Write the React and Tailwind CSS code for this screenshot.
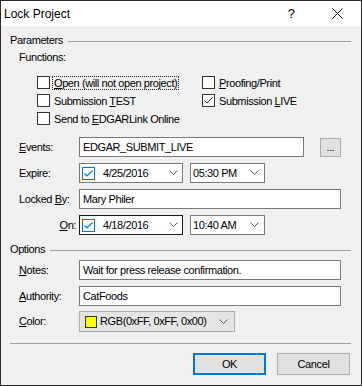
import React from 'react';

const Chevron = () => (
  <svg width="9" height="6" viewBox="0 0 9 6" className="shrink-0">
    <polyline points="0.5,0.5 4.5,4.5 8.5,0.5" fill="none" stroke="#5a5a5a" strokeWidth="1" />
  </svg>
);

const Check = ({ checked }) => (
  <span className="w-[13px] h-[13px] border border-[#333] bg-white shrink-0 flex items-center justify-center">
    {checked && (
      <svg width="11" height="11" viewBox="0 0 11 11">
        <polyline points="1.5,5.5 4,8 9.5,2.5" fill="none" stroke="#333" strokeWidth="1" />
      </svg>
    )}
  </span>
);

const U = ({ children }) => <span className="underline underline-offset-[1px]">{children}</span>;

const CheckItem = ({ checked, focus, children }) => (
  <div className="flex items-center h-[15px]">
    <Check checked={checked} />
    <span className={`ml-[2px] px-[1px] leading-[12px] border ${focus ? 'border-dotted border-[#222]' : 'border-transparent'}`}>
      {children}
    </span>
  </div>
);

const Row = ({ className = '', label, right, children }) => (
  <div className={`flex items-center ml-[18px] ${className}`}>
    <div className={`w-[60px] shrink-0 ${right ? 'text-right pr-[3px]' : ''}`}>{label}</div>
    {children}
  </div>
);

const TextBox = ({ w, children }) => (
  <div className={`${w} h-[20px] bg-white border border-[#7a7a7a] flex items-center pl-[3px]`}>{children}</div>
);

const DatePicker = ({ date, dark }) => (
  <div className={`w-[104px] h-[20px] bg-white border ${dark ? 'border-[#1a1a1a]' : 'border-[#7a7a7a]'} flex items-center pl-[2px] pr-[4px]`}>
    <span className="w-[13px] h-[13px] border border-[#0078d7] bg-white flex items-center justify-center shrink-0">
      <svg width="11" height="11" viewBox="0 0 11 11">
        <polyline points="1.5,5.5 4,8 9.5,2.5" fill="none" stroke="#0078d7" strokeWidth="1.2" />
      </svg>
    </span>
    <span className="ml-[8px] flex-1">{date}</span>
    <Chevron />
  </div>
);

const TimePicker = ({ time }) => (
  <div className="w-[75px] h-[20px] ml-[7px] bg-white border border-[#7a7a7a] flex items-center pl-[2px] pr-[5px]">
    <span className="flex-1">{time}</span>
    <Chevron />
  </div>
);

const Section = ({ title, className = '' }) => (
  <div className={`flex items-center h-[14px] ml-[9px] mr-[10px] ${className}`}>
    <span>{title}</span>
    <span className="flex-1 h-px bg-[#a0a0a0] ml-[5px] mt-[2px]" />
  </div>
);

export default function App() {
  return (
    <div className="w-[362px] h-[386px] border border-[#2b2b2b] bg-[#f0f0f0] flex flex-col text-[11px] tracking-[-0.4px] text-black font-['Liberation_Sans',Arial,sans-serif] overflow-hidden">
      <div className="h-[25px] bg-white flex items-center shrink-0">
        <span className="pl-[3px] text-[12px] tracking-normal">Lock Project</span>
        <span className="ml-auto text-[13px] tracking-normal mt-[1px]">?</span>
        <svg width="11" height="11" viewBox="0 0 11 11" className="ml-[37px] mr-[18px]">
          <path d="M0.5 0.5 L10.5 10.5 M10.5 0.5 L0.5 10.5" stroke="#111" strokeWidth="1" fill="none" />
        </svg>
      </div>

      <Section title="Parameters" className="mt-[7px]" />
      <div className="h-[14px] ml-[18px] mt-[3px] flex items-center">Functions:</div>

      <div className="grid grid-cols-[165px_auto] gap-y-[3px] ml-[36px] mt-[11px]">
        <CheckItem focus><U>O</U>pen (will not open project)</CheckItem>
        <CheckItem><U>P</U>roofing/Print</CheckItem>
        <CheckItem>Submission <U>T</U>EST</CheckItem>
        <CheckItem checked>Submission <U>L</U>IVE</CheckItem>
        <CheckItem>Send to <U>E</U>DGARLink Online</CheckItem>
      </div>

      <Row className="mt-[11px]" label={<><U>E</U>vents:</>}>
        <TextBox w="w-[225px]">EDGAR_SUBMIT_LIVE</TextBox>
        <div className="ml-[16px] w-[21px] h-[19px] bg-[#e1e1e1] border border-[#adadad] flex items-end justify-center pb-[3px] leading-none">...</div>
      </Row>

      <Row className="mt-[6px]" label="Expire:">
        <DatePicker date="4/25/2016" />
        <TimePicker time="05:30 PM" />
      </Row>

      <Row className="mt-[6px]" label={<>Locked <U>B</U>y:</>}>
        <TextBox w="w-[262px]">Mary Philer</TextBox>
      </Row>

      <Row className="mt-[6px]" right label={<><U>O</U>n:</>}>
        <DatePicker date="4/18/2016" dark />
        <TimePicker time="10:40 AM" />
      </Row>

      <Section title="Options" className="mt-[7px]" />

      <Row className="mt-[4px]" label={<><U>N</U>otes:</>}>
        <TextBox w="w-[262px]">Wait for press release confirmation.</TextBox>
      </Row>

      <Row className="mt-[6px]" label={<><U>A</U>uthority:</>}>
        <TextBox w="w-[262px]">CatFoods</TextBox>
      </Row>

      <Row className="mt-[5px]" label={<><U>C</U>olor:</>}>
        <div className="w-[156px] h-[21px] bg-[#e5e5e5] border border-[#adadad] flex items-center pl-[5px] pr-[6px]">
          <span className="w-[12px] h-[12px] bg-[#ffff00] border border-[#333] shrink-0" />
          <span className="ml-[3px] flex-1">RGB(0xFF, 0xFF, 0x00)</span>
          <Chevron />
        </div>
      </Row>

      <div className="h-px bg-[#a0a0a0] ml-[9px] mr-[10px] mt-[11px]" />

      <div className="flex justify-end gap-[11px] pr-[11px] mt-[9px]">
        <div className="w-[73px] h-[22px] bg-[#e1e1e1] border-2 border-[#0078d7] flex items-center justify-center">OK</div>
        <div className="w-[73px] h-[22px] bg-[#e1e1e1] border border-[#adadad] flex items-center justify-center">Cancel</div>
      </div>
    </div>
  );
}
